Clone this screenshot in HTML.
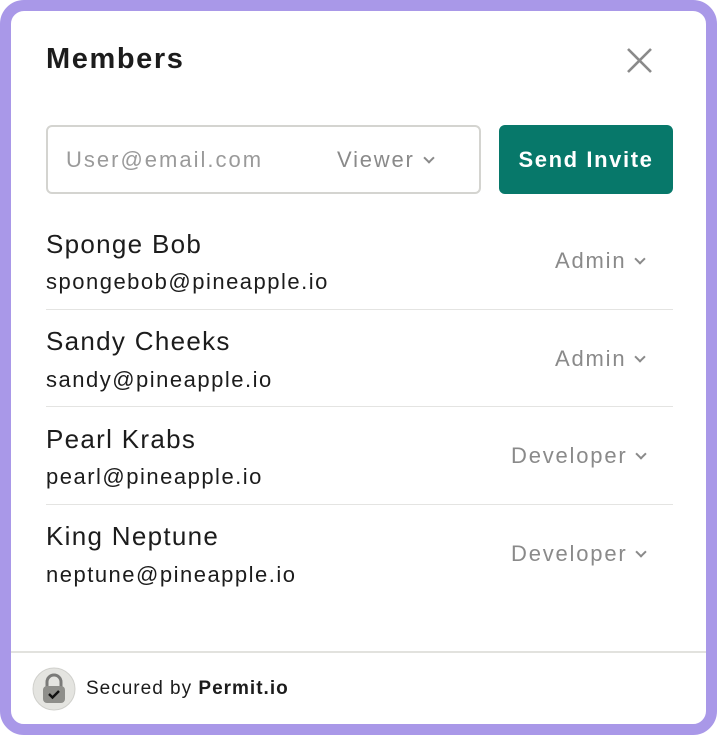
<!DOCTYPE html>
<html><head><style>
*{margin:0;padding:0;box-sizing:border-box}
body{width:717px;height:735px;background:#fff;font-family:"Liberation Sans",sans-serif;position:relative;overflow:hidden}
.frame{position:absolute;left:0;top:0;width:717px;height:735px;border:11px solid #a998e8;border-radius:24px;background:#fff}
.abs{position:absolute;white-space:nowrap}
.title{left:46px;top:43px;font-size:29px;font-weight:bold;color:#1c1c1c;letter-spacing:1.6px}
.input{left:46px;top:125px;width:435px;height:69px;border:2px solid #d4d4d0;border-radius:6px}
.ph{left:66px;top:147px;font-size:22px;color:#9a9a9a;letter-spacing:2px}
.sel{font-size:22px;color:#8a8a8a;letter-spacing:1.8px}
.btn{left:499px;top:125px;width:174px;height:69px;background:#07786a;border-radius:6px;color:#fff;font-size:22px;font-weight:bold;text-align:center;line-height:69px;letter-spacing:1.6px}
.name{font-size:26px;color:#1c1c1c;letter-spacing:1.3px}
.mail{font-size:22px;color:#1c1c1c;letter-spacing:1.5px}
.sep{left:46px;width:627px;height:1px;background:#e4e4e2}
.chev{display:inline-block;width:8px;height:8px;border-right:2px solid #8a8a8a;border-bottom:2px solid #8a8a8a;transform:rotate(45deg);margin-left:10px;position:relative;top:-5px}
</style></head><body>
<div class="frame"></div>
<div class="abs title">Members</div>
<svg class="abs" style="left:626px;top:47px" width="27" height="27"><path d="M2 2L25 25M25 2L2 25" stroke="#8a8a8a" stroke-width="2.6"/></svg>
<div class="abs input"></div>
<div class="abs ph">User@email.com</div>
<div class="abs sel" style="left:337px;top:147px">Viewer<span class="chev"></span></div>
<div class="abs btn">Send Invite</div>

<div class="abs name" style="left:46px;top:229px">Sponge Bob</div>
<div class="abs mail" style="left:46px;top:269px">spongebob@pineapple.io</div>
<div class="abs sel" style="left:555px;top:248px">Admin<span class="chev"></span></div>
<div class="abs sep" style="top:309px"></div>

<div class="abs name" style="left:46px;top:326px">Sandy Cheeks</div>
<div class="abs mail" style="left:46px;top:367px">sandy@pineapple.io</div>
<div class="abs sel" style="left:555px;top:346px">Admin<span class="chev"></span></div>
<div class="abs sep" style="top:406px"></div>

<div class="abs name" style="left:46px;top:424px">Pearl Krabs</div>
<div class="abs mail" style="left:46px;top:464px">pearl@pineapple.io</div>
<div class="abs sel" style="left:511px;top:443px">Developer<span class="chev"></span></div>
<div class="abs sep" style="top:504px"></div>

<div class="abs name" style="left:46px;top:521px">King Neptune</div>
<div class="abs mail" style="left:46px;top:562px">neptune@pineapple.io</div>
<div class="abs sel" style="left:511px;top:541px">Developer<span class="chev"></span></div>

<div class="abs" style="left:11px;top:651px;width:695px;height:2px;background:#e2e2de"></div>
<svg class="abs" style="left:32px;top:667px" width="44" height="44">
<circle cx="22" cy="22" r="21" fill="#e4e4e0" stroke="#d0d0cc"/>
<path d="M15 20v-5a7 7 0 0 1 14 0v5" fill="none" stroke="#7a7a78" stroke-width="3"/>
<rect x="11" y="19" width="22" height="17" rx="4" fill="#8e8e8a"/>
<path d="M17 27l3.5 3.5L27 24" fill="none" stroke="#111" stroke-width="2.4"/>
</svg>
<div class="abs" style="left:86px;top:678px;font-size:19px;color:#1c1c1c;letter-spacing:1px">Secured by <b>Permit.io</b></div>
</body></html>
